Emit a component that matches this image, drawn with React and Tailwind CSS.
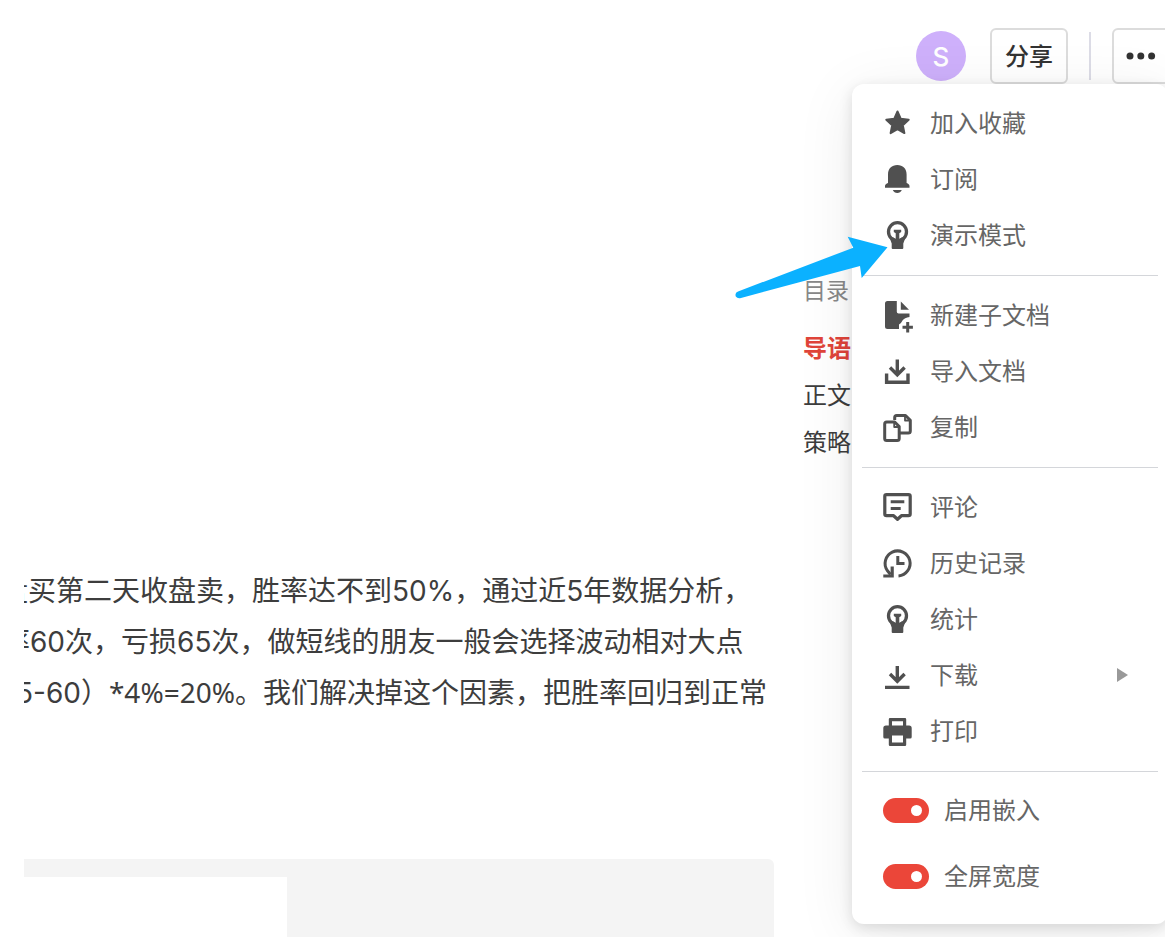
import React from "react";

const Bulb = () => (
  <>
    <circle cx="15.5" cy="11.7" r="9" fill="none" stroke="currentColor" strokeWidth="3.3" />
    <path d="M11.800 9.800h7.400v2.200l-1.900 1.200v6h-3.600v-6l-1.900-1.200z" />
    <path d="M7.500 17.500h4l2 1.500h4l2-1.500h4l-2.200 6V28q0 1-1 1h-9.600q-1 0-1-1v-4.500z" />
  </>
);

const icons = {
  star: (
    <path
      d="M15.500 3.500l3.300 7.300 7.900.9-5.900 5.500 1.600 7.900-6.900-3.900-6.900 3.900 1.600-7.900-5.900-5.500 7.900-.9z"
      stroke="currentColor"
      strokeWidth="2"
      strokeLinejoin="round"
    />
  ),
  bell: (
    <path d="M6 10.500C6 4.500 9.800 1 15.300 1s9.300 3.500 9.300 9.500V19c1.600.5 2.900 1.500 2.900 3v1.700H3V22c0-1.500 1.400-2.500 3-3zM10.800 26h9c-.8 2-2.500 3-4.500 3s-3.700-1-4.500-3z" />
  ),
  bulb: <Bulb />,
  newDoc: (
    <>
      <path d="M5.500 1h9.300v10.700q0 1.800 1.800 1.800h10.900V17q-5 .5-7 3.500-1 2.500-3.500 4V29H5.500Q3 29 3 26.500v-23Q3 1 5.500 1z" />
      <path d="M18.800 1.500l8.200 8.200h-8.200z" />
      <path d="M25.700 22v10.400M20.500 27.200h10.400" stroke="currentColor" strokeWidth="3" />
    </>
  ),
  importDoc: (
    <path
      d="M15.300 3.500v15M8 11.500l7.300 7.300 7.300-7.300M4.600 17.500v8.800h21.400v-8.800"
      fill="none"
      stroke="currentColor"
      strokeWidth="3.400"
    />
  ),
  copy: (
    <g fill="none" stroke="currentColor" strokeWidth="3" strokeLinejoin="round">
      <path d="M12.700 8V5.500q0-2 2-2h8.800l4.800 4.800V19q0 2-2 2H18" />
      <path d="M4.700 10h8l4.500 4.500V26.500q0 2-2 2H4.700q-2 0-2-2V12q0-2 2-2z" />
      <path d="M12.200 10v5h5M23 3.500v5h5" strokeWidth="1.800" />
    </g>
  ),
  comment: (
    <g fill="none" stroke="currentColor" strokeWidth="3.200">
      <path
        d="M4.500 2.600h22q1.700 0 1.700 1.700V22q0 1.700-1.700 1.700h-7.100l-3.900 3.600-3.900-3.600H4.500q-1.700 0-1.700-1.700V4.300q0-1.700 1.700-1.700z"
        strokeLinejoin="round"
      />
      <path d="M8.700 9.800h13.600M8.700 16.500h10" strokeWidth="2.900" />
    </g>
  ),
  history: (
    <g fill="none" stroke="currentColor" strokeWidth="3">
      <path d="M16.500 27.900A12.500 12.500 0 1 0 5.500 22.800L8.500 26.500" />
      <path d="M10.200 18.500V28H1.300" strokeWidth="3.200" />
      <path d="M15.800 8v7.600h6.700" strokeWidth="3" />
    </g>
  ),
  download: (
    <path
      d="M15.300 6v15M8 14l7.300 7.300 7.300-7.300M3 27.400h24.500"
      fill="none"
      stroke="currentColor"
      strokeWidth="3.400"
    />
  ),
  print: (
    <path
      fillRule="evenodd"
      d="M8 2h15q1.200 0 1.200 1.200V9.500H27q2.700 0 2.700 2.700V21q0 1.500-1.500 1.500h-4v6.300q0 1.200-1.200 1.200H8q-1.200 0-1.200-1.200v-6.300h-4Q1.300 22.500 1.300 21v-8.800q0-2.700 2.700-2.700h2.800V3.200Q6.800 2 8 2zM10 5.200v4.300h11V5.200zM10 19.500v7h11v-7z"
    />
  ),
};

const groups = [
  [
    ["star", "加入收藏"],
    ["bell", "订阅"],
    ["bulb", "演示模式"],
  ],
  [
    ["newDoc", "新建子文档"],
    ["importDoc", "导入文档"],
    ["copy", "复制"],
  ],
  [
    ["comment", "评论"],
    ["history", "历史记录"],
    ["bulb", "统计"],
    ["download", "下载", true],
    ["print", "打印"],
  ],
];

function MenuItem({ icon, label, submenu }) {
  return (
    <button type="button" className="flex h-14 w-full items-center pl-5 text-left text-[#666]">
      <svg viewBox="0 0 30 30" className="size-[30px] shrink-0 overflow-visible text-[#505050]" fill="currentColor" aria-hidden="true">
        {icons[icon]}
      </svg>
      <span className="ml-[18px] flex-1 pt-[2px]">{label}</span>
      {submenu && (
        <svg viewBox="0 0 11 14" className="mr-[30px] h-[14px] w-[11px]" fill="#999" aria-hidden="true">
          <path d="M0 0l11 7-11 7z" />
        </svg>
      )}
    </button>
  );
}

function Toggle({ label }) {
  return (
    <label className="flex h-[66px] items-center gap-[15px] pl-[21px] text-[#666]">
      <input
        type="checkbox"
        defaultChecked
        className="flex h-[25px] w-[46px] shrink-0 appearance-none items-center rounded-full bg-[#bbb] px-[7px] before:block before:size-[11px] before:rounded-full before:bg-white checked:justify-end checked:bg-[#eb4639]"
      />
      <span className="pt-[2px]">{label}</span>
    </label>
  );
}

export default function App() {
  return (
    <div
      lang="zh-CN"
      className="bg-white pr-2 pl-6 font-['Inter','Noto_Sans_CJK_SC',sans-serif] text-[24px] text-[#3d3d3d]"
    >
      <div className="relative overflow-hidden">
        <header className="-mr-2 flex h-[84px] items-end justify-end pt-7">
          <div className="mr-6 mb-[3px] flex size-[50px] items-center justify-center rounded-full bg-[#ceb0fb] text-[26px] font-medium text-white">
            S
          </div>
          <button type="button" className="h-14 w-[78px] rounded-md border-2 border-[#dcdcdc] bg-white pt-[2px] font-medium text-[#333]">
            分享
          </button>
          <div className="mr-[21px] mb-1 ml-[21px] h-12 w-[2px] bg-[#dcdce6]" />
          <button
            type="button"
            aria-label="更多"
            className="flex h-14 w-[61px] items-center rounded-md border-2 border-[#dcdcdc] bg-white pl-3 text-[#333]"
          >
            <svg viewBox="0 0 30 8" className="h-2 w-[30px]" fill="currentColor" aria-hidden="true">
              <circle cx="4" cy="4" r="3.500" />
              <circle cx="14.800" cy="4" r="3.500" />
              <circle cx="25.600" cy="4" r="3.500" />
            </svg>
          </button>
        </header>

        <main className="flex">
          <article className="min-w-0 flex-1 pt-[482px]">
            <div className="overflow-hidden text-[28px] leading-[51px] whitespace-nowrap">
              <p className="-ml-6">盘买第二天收盘卖，胜率达不到50%，通过近5年数据分析，</p>
              <p className="-ml-[22px]">率60次，亏损65次，做短线的朋友一般会选择波动相对大点</p>
              <p className="-ml-2">
                5-60）<span className="font-['Noto_Sans',sans-serif] leading-none">*4%=20%</span>。我们解决掉这个因素，把胜率回归到正常
              </p>
            </div>
            <div className="mt-[140px] h-[78px] rounded-tr-md bg-[#f4f4f4] pt-[18px]">
              <div className="h-[60px] w-[263px] bg-white" />
            </div>
          </article>

          <nav className="ml-[29px] w-[362px] shrink-0 pt-[183px]" aria-label="目录">
            <h2 className="mb-[10px] text-[23px] leading-[48px] text-[#888]">目录</h2>
            <a href="#intro" className="block leading-[47px] font-bold text-[#e0443a]">
              导语
            </a>
            <a href="#body" className="block leading-[47px]">
              正文
            </a>
            <a href="#strategy" className="block leading-[47px]">
              策略
            </a>
          </nav>
        </main>

        <div className="absolute top-[84px] -right-[3px] w-[316px] rounded-xl bg-white px-[10px] pb-[15px] shadow-[0_4px_14px_rgba(0,0,0,0.12),0_10px_60px_rgba(0,0,0,0.08)]">
          {groups.map((items, i) => (
            <div key={i} className="border-b border-[#d4d6da] pt-[11px] pb-3">
              {items.map(([icon, label, submenu]) => (
                <MenuItem key={label} icon={icon} label={label} submenu={submenu} />
              ))}
            </div>
          ))}
          <div className="pt-[5px]">
            <Toggle label="启用嵌入" />
            <Toggle label="全屏宽度" />
          </div>
        </div>

        <svg
          viewBox="0 0 154 64"
          className="pointer-events-none absolute top-[236px] right-[276px] h-16 w-[154px]"
          fill="#0bb1ff"
          aria-hidden="true"
        >
          <path d="M3 55.500L118.300 11.700 112.700.7 152.500 11.300 126.700 42 125 30 6 62Q2.500 63 .8 60.500-.5 57 3 55.500z" />
        </svg>
      </div>
    </div>
  );
}
